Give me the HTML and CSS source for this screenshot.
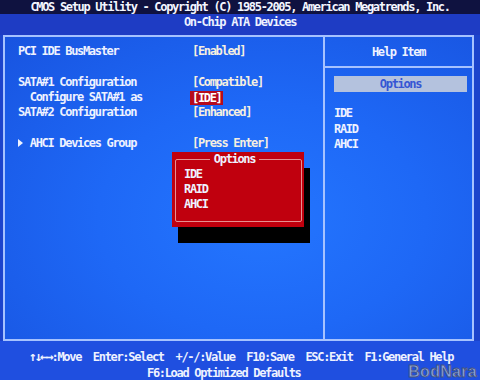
FILE: index.html
```html
<!DOCTYPE html>
<html lang="en">
<head>
    <meta charset="UTF-8">
    <title>CMOS Setup Utility - On-Chip ATA Devices</title>
    <link rel="stylesheet" href="styles.css">
</head>
<body>
    <div class="screen">
        <div class="top">CMOS Setup Utility - Copyright (C) 1985-2005, American Megatrends, Inc.</div>
        <div class="sub">On-Chip ATA Devices</div>

        <div class="frame">
            <div class="main">
                <div class="row"><span class="label">PCI IDE BusMaster</span><span class="value">[Enabled]</span></div>
                <div class="row"></div>
                <div class="row"><span class="label">SATA#1 Configuration</span><span class="value">[Compatible]</span></div>
                <div class="row"><span class="label indent">Configure SATA#1 as</span><span class="value picked">[IDE]</span></div>
                <div class="row"><span class="label">SATA#2 Configuration</span><span class="value">[Enhanced]</span></div>
                <div class="row"></div>
                <div class="row"><span class="label"><span class="arrow"></span>AHCI Devices Group</span><span class="value">[Press Enter]</span></div>
            </div>

            <div class="help">
                <div class="help-title">Help Item</div>
                <div class="help-bar">Options</div>
                <div class="help-list">
                    <div>IDE</div>
                    <div>RAID</div>
                    <div>AHCI</div>
                </div>
            </div>

            <!-- popup list over the setup page -->
            <div class="popup">
                <div class="popup-box">
                    <div class="popup-title"><span>Options</span></div>
                    <div class="popup-item">IDE</div>
                    <div class="popup-item">RAID</div>
                    <div class="popup-item">AHCI</div>
                </div>
            </div>
        </div>

        <div class="footer">
            <div class="keys"><span class="arrows">↑↓←→</span>:Move  Enter:Select  +/-/:Value  F10:Save  ESC:Exit  F1:General Help</div>
            <div class="keys second">F6:Load Optimized Defaults</div>
        </div>

        <div class="mark">BodNara</div>
    </div>
</body>
</html>
```

FILE: styles.css
```css
body { margin: 0; background: #1c44cc; }
.screen { position: relative; width: 480px; height: 380px; overflow: hidden; background: #1c44cc; font-family: "DejaVu Sans Mono", "Liberation Mono", monospace; font-weight: bold; font-size: 12px; letter-spacing: -1.32px; color: #eef2ff; }

.top { height: 14px; line-height: 15px; background: #0f1240; text-align: center; color: #f4f6ff; }
.sub { height: 21px; line-height: 16px; background: #1e3cc4; text-align: center; }

.frame { position: relative; height: 306px; margin: 0 6px 0 3px; box-sizing: border-box; border: 2px solid #a6c2ff; display: flex; background: radial-gradient(ellipse at 55% 60%, #2476ff 0%, #1e68f6 45%, #1854e0 100%); }

.main { width: 320px; box-sizing: border-box; border-right: 2px solid #a6c2ff; padding: 7.4px 0 0 13px; }
.row { display: flex; height: 15.2px; line-height: 15.2px; }
.label { width: 174px; flex-shrink: 0; }
.indent { padding-left: 11.8px; box-sizing: border-box; }
.arrow { display: inline-block; width: 11.8px; height: 8px; vertical-align: -0.5px; }
.arrow::before { content: ""; display: block; width: 0; height: 0; border-left: 5px solid #eef2ff; border-top: 4px solid transparent; border-bottom: 4px solid transparent; }
.value { color: #f6efe0; }
.picked { background: #b60a1c; color: #ffffff; line-height: 14px; height: 14px; align-self: center; margin-left: -2px; padding: 0 1px 0 2px; }

.help { flex: 1; }
.help-title { padding: 8.4px 0 5.4px; line-height: 15.2px; text-align: center; border-bottom: 2px solid #a6c2ff; }
.help-bar { margin: 8px 5px 0 9px; height: 16px; line-height: 16px; background: #b4c2de; color: #3656d4; text-align: center; }
.help-list { margin-top: 14.4px; padding-left: 9px; line-height: 15.2px; }

.popup { position: absolute; left: 167px; top: 115px; width: 132px; height: 75px; background: #c0000e; box-shadow: 6px 16px 0 #000; }
.popup-box { height: 63px; margin: 7px 2px 0 3px; box-sizing: border-box; border: 1px solid #e69090; border-radius: 2px; }
.popup-title { margin-top: -8.2px; padding-right: 8px; line-height: 15.2px; text-align: center; }
.popup-title span { background: #c0000e; padding: 0 4px; }
.popup-item { padding-left: 8px; line-height: 15.2px; }

.footer { height: 39px; padding-top: 8.4px; box-sizing: border-box; background: #1f4fe0; }
.keys { line-height: 15.2px; white-space: pre; padding-left: 29px; }
.arrows { letter-spacing: -2.2px; font-size: 13px; }
.second { padding-left: 147px; }

.mark { position: absolute; right: 3px; bottom: 0; line-height: 16px; font-family: "Liberation Sans", Arial, sans-serif; font-size: 16px; font-weight: bold; letter-spacing: 0.3px; color: rgba(175, 188, 218, 0.8); -webkit-text-stroke: 0.8px #44547e; }
```
